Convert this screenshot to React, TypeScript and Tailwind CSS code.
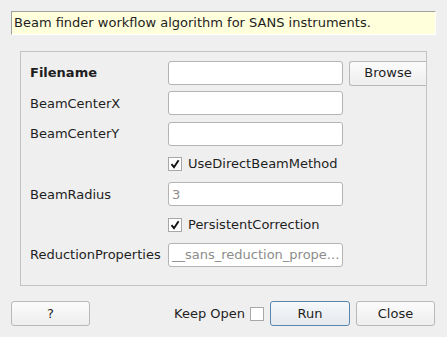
import React from "react";

const Input = ({ value, gray }: { value?: string; gray?: boolean }) => (
  <div
    className={`h-[24px] w-[175px] rounded-[3px] border border-[#b4b4b4] bg-white px-[3px] flex items-center overflow-hidden whitespace-nowrap ${gray ? "text-[#8c8c8c]" : "text-[#1e1e1e]"}`}
  >
    {value}
  </div>
);

const Check = ({ label }: { label: string }) => (
  <div className="flex items-center gap-[6px] h-[24px]">
    <div className="w-[14px] h-[14px] border border-[#a8a8a8] bg-white flex items-center justify-center">
      <svg width="10" height="10" viewBox="0 0 10 10">
        <path d="M1.5 5.2 L4 8.2 L8.6 1.2" fill="none" stroke="#111" strokeWidth="1.9" />
      </svg>
    </div>
    <span>{label}</span>
  </div>
);

const Btn = ({ children, def, cls }: { children: React.ReactNode; def?: boolean; cls?: string }) => (
  <div
    className={`h-[25px] rounded-[3px] border flex items-center justify-center bg-gradient-to-b ${def ? "border-[#5a86ad] from-[#f6f8fa] to-[#e4e9ee]" : "border-[#b8b8b8] from-[#fbfbfb] to-[#eeeeee]"} ${cls ?? "w-[79px]"}`}
  >
    {children}
  </div>
);

export default function App() {
  return (
    <div
      className="w-[447px] h-[337px] bg-[#efefef] text-[13px] text-[#1e1e1e] flex flex-col overflow-hidden"
      style={{ fontFamily: '"DejaVu Sans", sans-serif' }}
    >
      <div className="mt-[11px] ml-[11px] w-[425px] h-[24px] bg-[#ffffdc] border-t border-l border-t-[#a0a0a0] border-l-[#a0a0a0] border-b border-r border-b-[#ffffff] border-r-[#ffffff] flex items-center pl-[2px]">
        Beam finder workflow algorithm for SANS instruments.
      </div>

      <div className="mt-[16px] ml-[20px] w-[407px] h-[235px] border border-[#c2c2c2] pt-[9px] pl-[9px]">
        <div className="grid grid-cols-[132px_175px_77px] grid-rows-[repeat(7,24px)] gap-x-[6px] gap-y-[6.33px] items-center">
          <span className="font-bold">Filename</span>
          <Input />
          <Btn cls="w-[77px] h-[24px] border-r-0 rounded-r-none">Browse</Btn>

          <span>BeamCenterX</span>
          <Input />
          <span />

          <span>BeamCenterY</span>
          <Input />
          <span />

          <span />
          <div className="col-span-2">
            <Check label="UseDirectBeamMethod" />
          </div>

          <span>BeamRadius</span>
          <Input value="3" gray />
          <span />

          <span />
          <div className="col-span-2">
            <Check label="PersistentCorrection" />
          </div>

          <span>ReductionProperties</span>
          <Input value="__sans_reduction_prope..." gray />
          <span />
        </div>
      </div>

      <div className="mt-[15px] pl-[11px] pr-[12px] flex items-center">
        <Btn>?</Btn>
        <div className="flex-1" />
        <span>Keep Open</span>
        <div className="ml-[5px] w-[14px] h-[14px] border border-[#a8a8a8] bg-white" />
        <div className="w-[6px]" />
        <Btn def cls="w-[80px]">Run</Btn>
        <div className="w-[6px]" />
        <Btn>Close</Btn>
      </div>
    </div>
  );
}
